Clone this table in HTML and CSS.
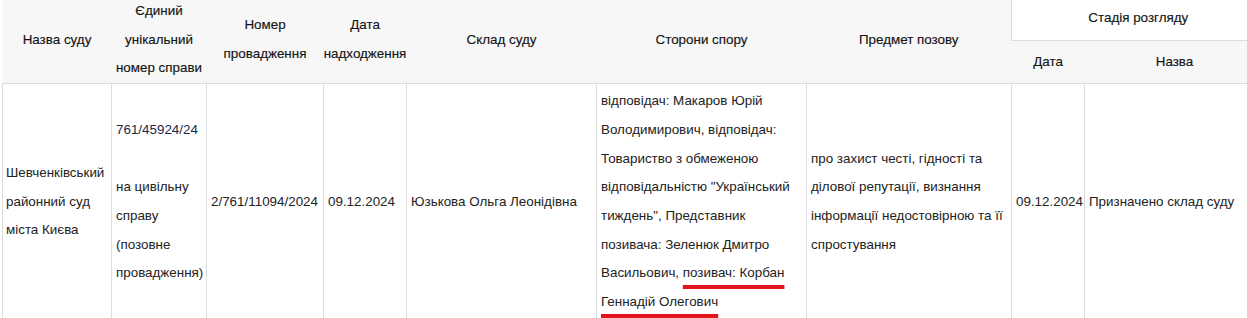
FILE: index.html
```html
<!DOCTYPE html>
<html lang="uk">
<head>
<meta charset="utf-8">
<title>Справи</title>
<link rel="stylesheet" href="styles.css">
</head>
<body>
<table class="cases">
  <colgroup>
    <col class="c-court">
    <col class="c-number">
    <col class="c-proc">
    <col class="c-date">
    <col class="c-judges">
    <col class="c-sides">
    <col class="c-subject">
    <col class="c-sdate">
    <col class="c-sname">
  </colgroup>
  <thead>
    <tr class="head-top">
      <th rowspan="2">Назва суду</th>
      <th rowspan="2">Єдиний унікальний номер справи</th>
      <th rowspan="2">Номер провадження</th>
      <th rowspan="2">Дата надходження</th>
      <th rowspan="2">Склад суду</th>
      <th rowspan="2">Сторони спору</th>
      <th rowspan="2">Предмет позову</th>
      <th colspan="2" class="stage">Стадія розгляду</th>
    </tr>
    <tr class="head-sub">
      <th>Дата</th>
      <th>Назва</th>
    </tr>
  </thead>
  <tbody>
    <tr>
      <td class="court">Шевченківський районний суд міста Києва</td>
      <td><a class="case-link" href="#">761/45924/24</a><br><br>на цивільну справу (позовне провадження)</td>
      <td>2/761/11094/2024</td>
      <td>09.12.2024</td>
      <td>Юзькова Ольга Леонідівна</td>
      <td>відповідач: Макаров Юрій Володимирович, відповідач: Товариство з обмеженою відповідальністю "Український тиждень", Представник позивача: Зеленюк Дмитро Васильович, <span class="mark">позивач: Корбан Геннадій Олегович</span></td>
      <td class="subject">про захист честі, гідності та ділової репутації, визнання інформації недостовірною та її спростування</td>
      <td>09.12.2024</td>
      <td>Призначено склад суду</td>
    </tr>
  </tbody>
</table>
</body>
</html>
```

FILE: styles.css
```css
html, body {
  margin: 0;
  padding: 0;
  background: #ffffff;
  overflow: hidden;
}

body {
  font-family: "Liberation Sans", Arial, Helvetica, sans-serif;
  font-size: 13.4px;
  color: #222222;
}

.cases {
  border-collapse: collapse;
  table-layout: fixed;
  width: 1262px;
  margin: -3px 0 0 2px;
}

.c-court { width: 109px; }
.c-number { width: 95px; }
.c-proc { width: 117px; }
.c-date { width: 83px; }
.c-judges { width: 190px; }
.c-sides { width: 210px; }
.c-subject { width: 205px; }
.c-sdate { width: 73px; }
.c-sname { width: 180px; }

.cases th {
  background: #f7f7f7;
  font-weight: normal;
  color: #141414;
  -webkit-text-stroke: 0.15px #141414;
  text-align: center;
  vertical-align: middle;
  line-height: 28.7px;
  padding: 0;
  border-bottom: 1px solid #dcdcdc;
}

.head-top th {
  height: 43px;
}

.head-sub th {
  height: 42px;
}

.cases th.stage {
  background: #ffffff;
  border-left: 1px solid #dcdcdc;
  border-bottom: 1px solid #dcdcdc;
}

.cases td {
  border: 1px solid #dcdcdc;
  vertical-align: middle;
  text-align: left;
  line-height: 28.7px;
  padding: 3px 2px 3px 4px;
  color: #222222;
}

.cases td.court {
  padding-left: 3px;
}

.case-link {
  color: #1b2948;
  text-decoration: none;
}

.mark {
  text-decoration: underline;
  text-decoration-color: #e3141d;
  text-decoration-thickness: 4px;
  text-underline-offset: 8px;
  text-decoration-skip-ink: none;
}
```
